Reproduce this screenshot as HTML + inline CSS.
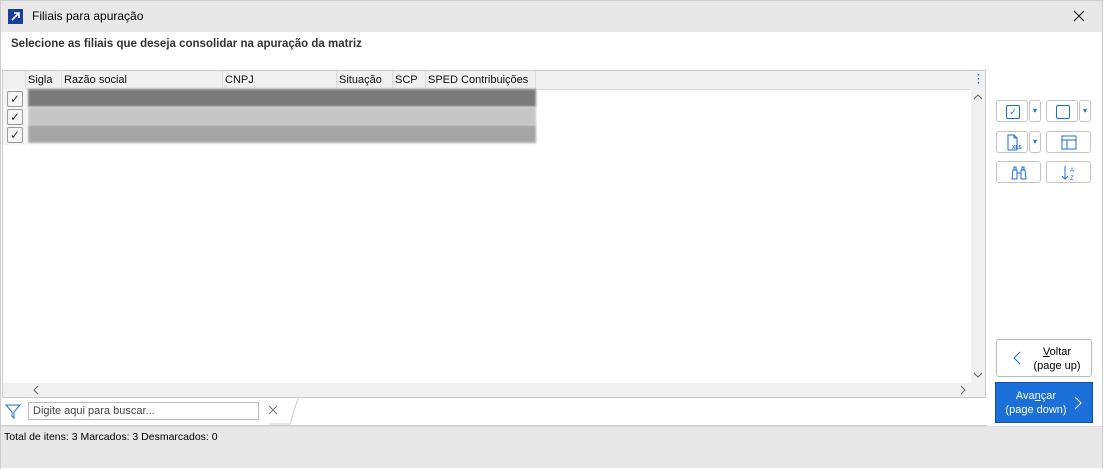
<!DOCTYPE html><html><head><style>
body{margin:0;width:1103px;height:469px;overflow:hidden;font-family:"Liberation Sans",sans-serif;font-size:12px;color:#000;background:#fff;position:relative}
.a{position:absolute;white-space:nowrap}
.btn{position:absolute;border:1px solid #c4c4c4;border-radius:3px;background:#fff;box-sizing:border-box}
.hd{position:absolute;top:0;height:18px;line-height:18px;border-right:1px solid #ddd;padding-left:2px;box-sizing:border-box;color:#111;font-size:11px;white-space:nowrap;overflow:hidden}
.cb{position:absolute;left:4px;width:14px;height:14px;border:1px solid #999;border-radius:2px;background:#f5f5f5;font-size:12px;line-height:14px;text-align:center;color:#333}
</style></head><body>
<div class="a" style="left:0;top:0;width:1103px;height:32px;background:#e8e8e8"></div>
<div class="a" style="left:8px;top:9px;width:15px;height:15px;background:#1a3f9a"><svg width="15" height="15"><path d="M4 11 L11 4 M6 4 H11 V9" stroke="#fff" stroke-width="1.6" fill="none"/></svg></div>
<div class="a" style="left:32px;top:9px;font-size:12px">Filiais para apuração</div>
<svg class="a" style="left:1073px;top:10px" width="12" height="12"><path d="M1 1L11 11M11 1L1 11" stroke="#222" stroke-width="1.2"/></svg>
<div class="a" style="left:11px;top:38px;font-weight:bold;color:#333;font-size:11.5px">Selecione as filiais que deseja consolidar na apuração da matriz</div>
<div class="a" style="left:0;top:0;width:1px;height:469px;background:#ccc"></div>
<div class="a" style="left:1102px;top:0;width:1px;height:469px;background:#ccc"></div>
<div class="a" style="left:0;top:0;width:1103px;height:1px;background:#ccc"></div>
<!-- grid -->
<div class="a" style="left:2px;top:70px;width:984px;height:328px;border:1px solid #ccc;box-sizing:border-box;background:#fff">
 <div class="a" style="left:0;top:0;width:982px;height:18px;background:#f0f0f0;border-bottom:1px solid #ddd"></div>
 <div class="hd" style="left:0;width:23px"></div>
 <div class="hd" style="left:23px;width:36px">Sigla</div>
 <div class="hd" style="left:59px;width:161px">Razão social</div>
 <div class="hd" style="left:220px;width:114px">CNPJ</div>
 <div class="hd" style="left:334px;width:56px">Situação</div>
 <div class="hd" style="left:390px;width:33px">SCP</div>
 <div class="hd" style="left:423px;width:110px">SPED Contribuições</div>
 <div class="a" style="left:974px;top:3px;color:#1a6fd8;font-weight:bold;font-size:10px;line-height:4px">·<br>·<br>·</div>
 <div class="a" style="left:0;top:18px;width:23px;height:56px;background:#f5f5f5"></div>
 <div class="cb" style="top:20px">✓</div><div class="cb" style="top:38px">✓</div><div class="cb" style="top:56px">✓</div>
 <div class="a" style="left:25px;top:18px;width:508px;height:18px;background:#7a7a7a;filter:blur(1px)"></div>
 <div class="a" style="left:25px;top:36px;width:508px;height:18px;background:#c6c6c6;filter:blur(1px)"></div>
 <div class="a" style="left:25px;top:54px;width:508px;height:18px;background:#a5a5a5;filter:blur(1px)"></div>
 <div class="a" style="left:968px;top:18px;width:14px;height:294px;background:#f0f0f0"></div>
 <svg class="a" style="left:970px;top:23px" width="10" height="6"><path d="M1 5L5 1L9 5" fill="none" stroke="#666"/></svg>
 <svg class="a" style="left:970px;top:301px" width="10" height="6"><path d="M1 1L5 5L9 1" fill="none" stroke="#666"/></svg>
 <div class="a" style="left:0;top:312px;width:982px;height:14px;background:#f0f0f0"></div>
 <svg class="a" style="left:30px;top:314px" width="6" height="10"><path d="M5 1L1 5L5 9" fill="none" stroke="#666"/></svg>
 <svg class="a" style="left:957px;top:314px" width="6" height="10"><path d="M1 1L5 5L1 9" fill="none" stroke="#666"/></svg>
</div>
<!-- search -->
<svg class="a" style="left:5px;top:403px" width="16" height="16"><path d="M1 2H15L9 9V15L7 13V9Z" fill="none" stroke="#1a6fd8"/></svg>
<div class="a" style="left:28px;top:402px;width:231px;height:18px;border:1px solid #bbb;box-sizing:border-box;color:#444;padding:2px 4px;font-size:11px">Digite aqui para buscar...</div>
<svg class="a" style="left:268px;top:405px" width="10" height="10"><path d="M1 1L9 9M9 1L1 9" stroke="#777"/></svg>
<svg class="a" style="left:270px;top:398px" width="30" height="27"><path d="M28 0 L20 26 H0" fill="none" stroke="#ccc"/></svg>
<div class="a" style="left:1px;top:425px;width:986px;height:1px;background:#ccc"></div>
<div class="a" style="left:1px;top:426px;width:1101px;height:41px;background:#e8e8e8;border-top:1px solid #ddd"></div>
<div class="a" style="left:4px;top:431px;font-size:10.5px">Total de itens: 3 Marcados: 3 Desmarcados: 0</div>
<!-- right buttons -->
<div class="btn" style="left:996px;top:100px;width:32px;height:22px"><div class="a" style="left:9px;top:4px;width:12px;height:12px;border:1px solid #1a6fd8;border-radius:2px;color:#1a6fd8;font-size:9px;line-height:12px;text-align:center">✓</div></div>
<div class="btn" style="left:1029px;top:100px;width:12px;height:22px;color:#1a6fd8;font-size:8px;text-align:center;line-height:20px">▾</div>
<div class="btn" style="left:1046px;top:100px;width:32px;height:22px"><div class="a" style="left:9px;top:4px;width:12px;height:12px;border:1px solid #1a6fd8;border-radius:2px"></div></div>
<div class="btn" style="left:1079px;top:100px;width:12px;height:22px;color:#1a6fd8;font-size:8px;text-align:center;line-height:20px">▾</div>
<div class="btn" style="left:996px;top:131px;width:32px;height:22px"><svg class="a" style="left:8px;top:2px" width="18" height="18"><path d="M3 1H9L12 4V16H3Z M9 1V4H12" fill="none" stroke="#1a6fd8"/><text x="7" y="15" font-size="5" fill="#1a6fd8" font-weight="bold">XLS</text></svg></div>
<div class="btn" style="left:1029px;top:131px;width:12px;height:22px;color:#1a6fd8;font-size:8px;text-align:center;line-height:20px">▾</div>
<div class="btn" style="left:1046px;top:131px;width:45px;height:22px"><svg class="a" style="left:14px;top:3px" width="16" height="15"><path d="M1 1H15V14H1Z M1 5H15 M6 5V14" fill="none" stroke="#1a6fd8"/></svg></div>
<div class="btn" style="left:996px;top:161px;width:45px;height:22px"><svg class="a" style="left:14px;top:3px" width="16" height="15"><path d="M2 5H6V14H1Z M10 5H14L15 14H10Z M6 8H10 M3 5V2H5V5 M11 5V2H13V5" fill="none" stroke="#1a6fd8"/></svg></div>
<div class="btn" style="left:1046px;top:161px;width:45px;height:22px"><svg class="a" style="left:14px;top:3px" width="16" height="16"><path d="M4 1V14 M1 11L4 14L7 11" fill="none" stroke="#1a6fd8"/><text x="9" y="7" font-size="6" fill="#1a6fd8">A</text><text x="9" y="15" font-size="6" fill="#1a6fd8">Z</text></svg></div>
<div class="btn" style="left:996px;top:339px;width:96px;height:38px;border-color:#bbb"><svg class="a" style="left:16px;top:11px" width="8" height="14"><path d="M7 1L1 7L7 13" fill="none" stroke="#1a6fd8"/></svg><div class="a" style="left:28px;top:5px;width:64px;text-align:center;line-height:14px;font-size:11px"><u>V</u>oltar<br>(page up)</div></div>
<div class="a" style="left:995px;top:382px;width:98px;height:41px;background:#1a6fd8;border:1px solid #0f4fa8;box-sizing:border-box;color:#fff"><div class="a" style="left:2px;top:6px;width:76px;text-align:center;line-height:14px;font-size:11px">Ava<u>n</u>çar<br>(page down)</div><svg class="a" style="left:78px;top:13px" width="8" height="14"><path d="M1 1L7 7L1 13" fill="none" stroke="#fff"/></svg></div>
</body></html>
